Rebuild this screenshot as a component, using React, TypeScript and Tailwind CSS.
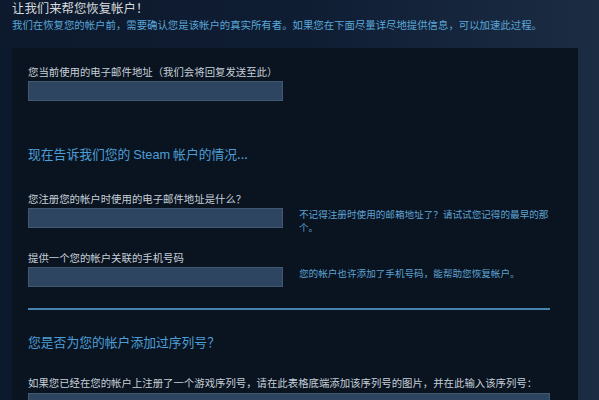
const cjk = { fontFamily: '"Noto Sans CJK SC", "Liberation Sans", sans-serif' };

function Field({ label, hint, className }: { label: string; hint?: string; className?: string }) {
  return (
    <div className={className}>
      <div className="text-[10.4px] leading-[13px] text-[#c6d0d8]">{label}</div>
      <div className="mt-[3px] flex h-[20px] items-start gap-4">
        <div className="h-[20px] w-[255px] shrink-0 border border-[#41586f] bg-[#2e4561]" />
        {hint && <div className="w-[252px] text-[9.6px] leading-[13px] text-[#5ea3d3]">{hint}</div>}
      </div>
    </div>
  );
}

export default function App() {
  return (
    <div
      className="h-[400px] w-full overflow-hidden bg-gradient-to-r from-[#0d192c] via-[#0f1d33] to-[#1b2c43]"
      style={cjk}
    >
      <div className="px-3 pt-px">
        <h1 className="text-[12.4px] leading-[14px] text-[#d6dade]">让我们来帮您恢复帐户！</h1>
        <p className="mt-[4px] text-[10.4px] leading-[12px] text-[#5aa7d9]">
          我们在恢复您的帐户前，需要确认您是该帐户的真实所有者。如果您在下面尽量详尽地提供信息，可以加速此过程。
        </p>

        <div className="mt-[17px] w-[566px] bg-[#0a1320] pl-4 pr-7 pt-[17px] pb-6">
          <Field label="您当前使用的电子邮件地址（我们会将回复发送至此）" />

          <h2 className="mt-[45px] text-[12.8px] leading-[16px] text-[#4c9fd6]">
            现在告诉我们您的 <span style={{ fontFamily: '"Liberation Sans", sans-serif' }}>Steam</span> 帐户的情况...
          </h2>

          <Field
            className="mt-[29px]"
            label="您注册您的帐户时使用的电子邮件地址是什么？"
            hint="不记得注册时使用的邮箱地址了？请试试您记得的最早的那个。"
          />
          <Field
            className="mt-[23px]"
            label="提供一个您的帐户关联的手机号码"
            hint="您的帐户也许添加了手机号码，能帮助您恢复帐户。"
          />

          <div className="mt-[21px] h-[2px] w-full bg-[#4585ad]" />

          <h2 className="mt-[24px] text-[12.8px] leading-[16px] text-[#4c9fd6]">您是否为您的帐户添加过序列号？</h2>

          <p className="mt-[26px] text-[10.4px] leading-[13px] text-[#c6d0d8]">
            如果您已经在您的帐户上注册了一个游戏序列号，请在此表格底端添加该序列号的图片，并在此输入该序列号：
          </p>
          <div className="mt-[4px] h-[20px] w-full border border-[#41586f] bg-[#2e4561]" />
        </div>
      </div>
    </div>
  );
}
